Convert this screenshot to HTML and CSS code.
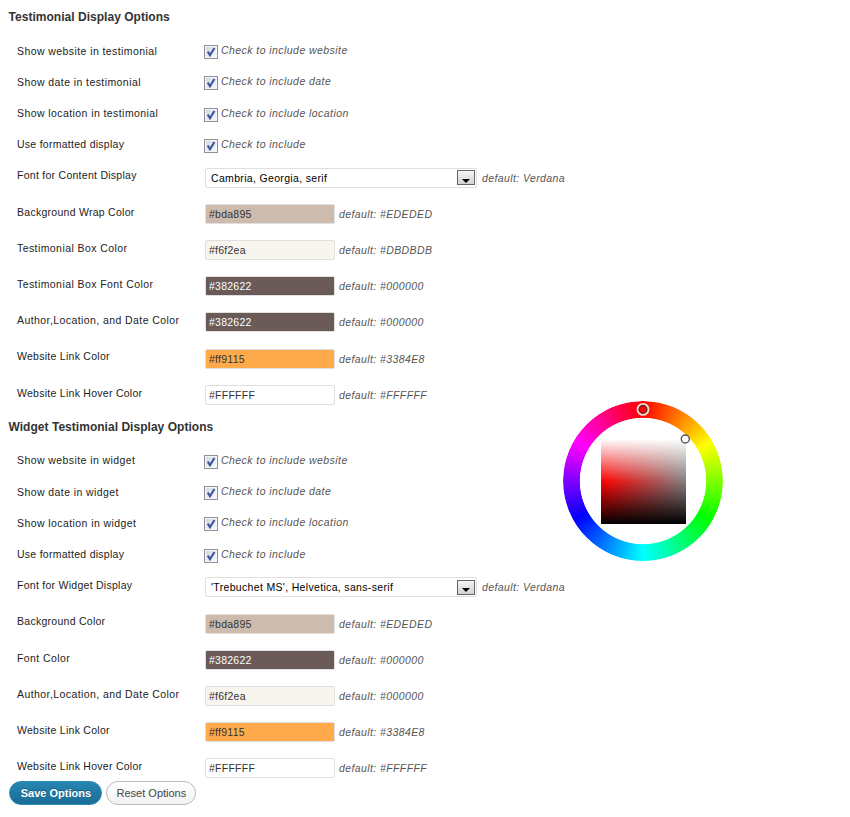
FILE: index.html
```html
<!DOCTYPE html>
<html lang="en">
<head>
<meta charset="utf-8">
<title>Testimonial Options</title>
<link rel="stylesheet" href="styles.css">
</head>
<body>
<svg class="defs" width="0" height="0"><symbol id="tick" viewBox="0 0 12 12"><path d="M2.8 5.6 5 9.3 9.4 2" fill="none" stroke="#41549c" stroke-width="2.1"/></symbol></svg>
<form class="options">
  <section class="group">
    <h3>Testimonial Display Options</h3>
    <div class="row check"><label>Show website in testimonial</label><div class="field"><span class="box"><svg><use href="#tick"/></svg></span><em>Check to include website</em></div></div>
    <div class="row check"><label>Show date in testimonial</label><div class="field"><span class="box"><svg><use href="#tick"/></svg></span><em>Check to include date</em></div></div>
    <div class="row check"><label>Show location in testimonial</label><div class="field"><span class="box"><svg><use href="#tick"/></svg></span><em>Check to include location</em></div></div>
    <div class="row check"><label class="tight">Use formatted display</label><div class="field"><span class="box"><svg><use href="#tick"/></svg></span><em>Check to include</em></div></div>
    <div class="row"><label class="tight">Font for Content Display</label><div class="field"><div class="select"><span>Cambria, Georgia, serif</span><i class="arrow"></i></div><em>default: Verdana</em></div></div>
    <div class="row"><label class="tight">Background Wrap Color</label><div class="field"><input class="tan" value="#bda895"><em>default: #EDEDED</em></div></div>
    <div class="row"><label>Testimonial Box Color</label><div class="field"><input class="cream" value="#f6f2ea"><em>default: #DBDBDB</em></div></div>
    <div class="row"><label>Testimonial Box Font Color</label><div class="field"><input class="brown" value="#382622"><em>default: #000000</em></div></div>
    <div class="row"><label>Author,Location, and Date Color</label><div class="field"><input class="brown" value="#382622"><em>default: #000000</em></div></div>
    <div class="row"><label class="tight">Website Link Color</label><div class="field"><input class="orange" value="#ff9115"><em>default: #3384E8</em></div></div>
    <div class="row"><label class="tight">Website Link Hover Color</label><div class="field"><input value="#FFFFFF"><em>default: #FFFFFF</em></div></div>
  </section>
  <section class="group">
    <h3>Widget Testimonial Display Options</h3>
    <div class="row check"><label>Show website in widget</label><div class="field"><span class="box"><svg><use href="#tick"/></svg></span><em>Check to include website</em></div></div>
    <div class="row check"><label>Show date in widget</label><div class="field"><span class="box"><svg><use href="#tick"/></svg></span><em>Check to include date</em></div></div>
    <div class="row check"><label>Show location in widget</label><div class="field"><span class="box"><svg><use href="#tick"/></svg></span><em>Check to include location</em></div></div>
    <div class="row check"><label class="tight">Use formatted display</label><div class="field"><span class="box"><svg><use href="#tick"/></svg></span><em>Check to include</em></div></div>
    <div class="row"><label class="tight">Font for Widget Display</label><div class="field"><div class="select"><span>'Trebuchet MS', Helvetica, sans-serif</span><i class="arrow"></i></div><em>default: Verdana</em></div></div>
    <div class="row"><label class="tight">Background Color</label><div class="field"><input class="tan" value="#bda895"><em>default: #EDEDED</em></div></div>
    <div class="row"><label>Font Color</label><div class="field"><input class="brown" value="#382622"><em>default: #000000</em></div></div>
    <div class="row"><label>Author,Location, and Date Color</label><div class="field"><input class="cream" value="#f6f2ea"><em>default: #000000</em></div></div>
    <div class="row"><label class="tight">Website Link Color</label><div class="field"><input class="orange" value="#ff9115"><em>default: #3384E8</em></div></div>
    <div class="row"><label class="tight">Website Link Hover Color</label><div class="field"><input value="#FFFFFF"><em>default: #FFFFFF</em></div></div>
  </section>
  <div class="actions"><button type="button" class="save">Save Options</button><button type="button" class="reset">Reset Options</button></div>
</form>
<div class="picker">
  <div class="wheel"></div>
  <div class="shade"></div>
  <svg class="markers" width="160" height="160" viewBox="0 0 160 160" fill="none">
    <circle cx="80" cy="8.4" r="5.3" stroke="#f4dcd4" stroke-width="2.2"/><circle cx="80" cy="8.4" r="3.9" stroke="#5a2828" stroke-width="1.3"/>
    <circle cx="122.3" cy="38" r="4" fill="#fff" stroke="#555" stroke-width="1.4"/>
  </svg>
</div>
</body>
</html>
```
FILE: styles.css
```css
* { box-sizing: border-box; }
body {
  margin: 0;
  position: relative;
  height: 817px;
  overflow: hidden;
  background: #fff;
  color: #222;
  font: 10.5px/14px "Liberation Sans", Arial, sans-serif;
}
.defs { position: absolute; }
h3 {
  margin: 0;
  height: 34.7px;
  padding: 9.3px 0 0 8.5px;
  font-size: 12px;
  line-height: 16px;
  color: #333;
  letter-spacing: 0.03px;
}
.group { height: 409.7px; }
.row {
  display: grid;
  grid-template-columns: 188px 1fr;
  height: 36.2px;
  padding-left: 17px;
}
.row.check { height: 31.2px; }
label { padding-top: 9px; letter-spacing: 0.42px; }
label.tight { letter-spacing: 0.27px; }
.field { display: flex; align-items: center; height: 20px; margin-top: 8.2px; }
em { margin-left: 4px; color: #555; letter-spacing: 0.4px; }
.check .field { align-items: flex-start; height: 16px; margin-top: 8.6px; }
.box {
  width: 14px;
  height: 14px;
  margin: 2px 0 0 -1px;
  border: 1px solid #8e9298;
  background: linear-gradient(135deg, #cfd6e2, #fafbfd);
  box-shadow: inset 0 0 0 1px #f4f6f9;
  display: block;
}
.box svg { display: block; width: 12px; height: 12px; }
.check em { margin-left: 3px; letter-spacing: 0.44px; }
input {
  width: 130px;
  height: 20px;
  padding: 0 3px;
  border: 1px solid #dfdfdf;
  border-radius: 2px;
  background: #fff;
  color: #333;
  font: inherit;
  letter-spacing: 0.25px;
}
.tan { background: #cdbcae; }
.cream { background: #f8f5ef; }
.brown { background: #6a5b58; color: #fff; }
.orange { background: #ffab4c; }
.select {
  display: flex;
  align-items: center;
  justify-content: space-between;
  width: 272px;
  height: 20px;
  padding: 0 1px 0 5px;
  border: 1px solid #dfdfdf;
  border-radius: 2px;
  color: #000;
  letter-spacing: 0.33px;
}
.select + em { margin-left: 5px; }
.arrow {
  display: flex;
  align-items: center;
  justify-content: center;
  width: 18px;
  height: 15px;
  border: 1px solid #666;
  background: linear-gradient(#f4f4f4, #d2d2d2);
  padding-top: 6px;
}
.arrow::before {
  content: "";
  border: 4px solid transparent;
  border-top-color: #000;
  border-bottom: 0;
}
.actions { display: flex; gap: 4px; padding-left: 9.4px; margin-top: -38.4px; }
button {
  height: 24px;
  padding: 0;
  border-radius: 12px;
  font: 11px/20px "Liberation Sans", Arial, sans-serif;
}
.save {
  width: 93px;
  border: 1px solid #298cba;
  background: linear-gradient(#2786b2, #1b6c94);
  color: #fff;
  font-weight: bold;
  text-shadow: 0 -1px 0 rgba(0, 0, 0, 0.3);
}
.reset {
  width: 90px;
  border: 1px solid #bbb;
  background: linear-gradient(#fff, #f2f2f2);
  color: #464646;
}
.picker { position: absolute; left: 563px; top: 401px; width: 160px; height: 160px; }
.wheel {
  height: 160px;
  border-radius: 50%;
  background: conic-gradient(#f00, #ff0 60deg, #0f0 120deg, #0ff 180deg, #00f 240deg, #f0f 300deg, #f00);
  -webkit-mask: radial-gradient(circle, transparent 62.8px, #000 63.6px);
  mask: radial-gradient(circle, transparent 62.8px, #000 63.6px);
}
.shade {
  position: absolute;
  left: 38px;
  top: 38px;
  width: 85px;
  height: 85px;
  background: linear-gradient(#fff, rgba(255, 255, 255, 0) 50%, rgba(0, 0, 0, 0) 50%, #000), linear-gradient(90deg, #f00, #808080);
}
.markers { position: absolute; left: 0; top: 0; }
```
